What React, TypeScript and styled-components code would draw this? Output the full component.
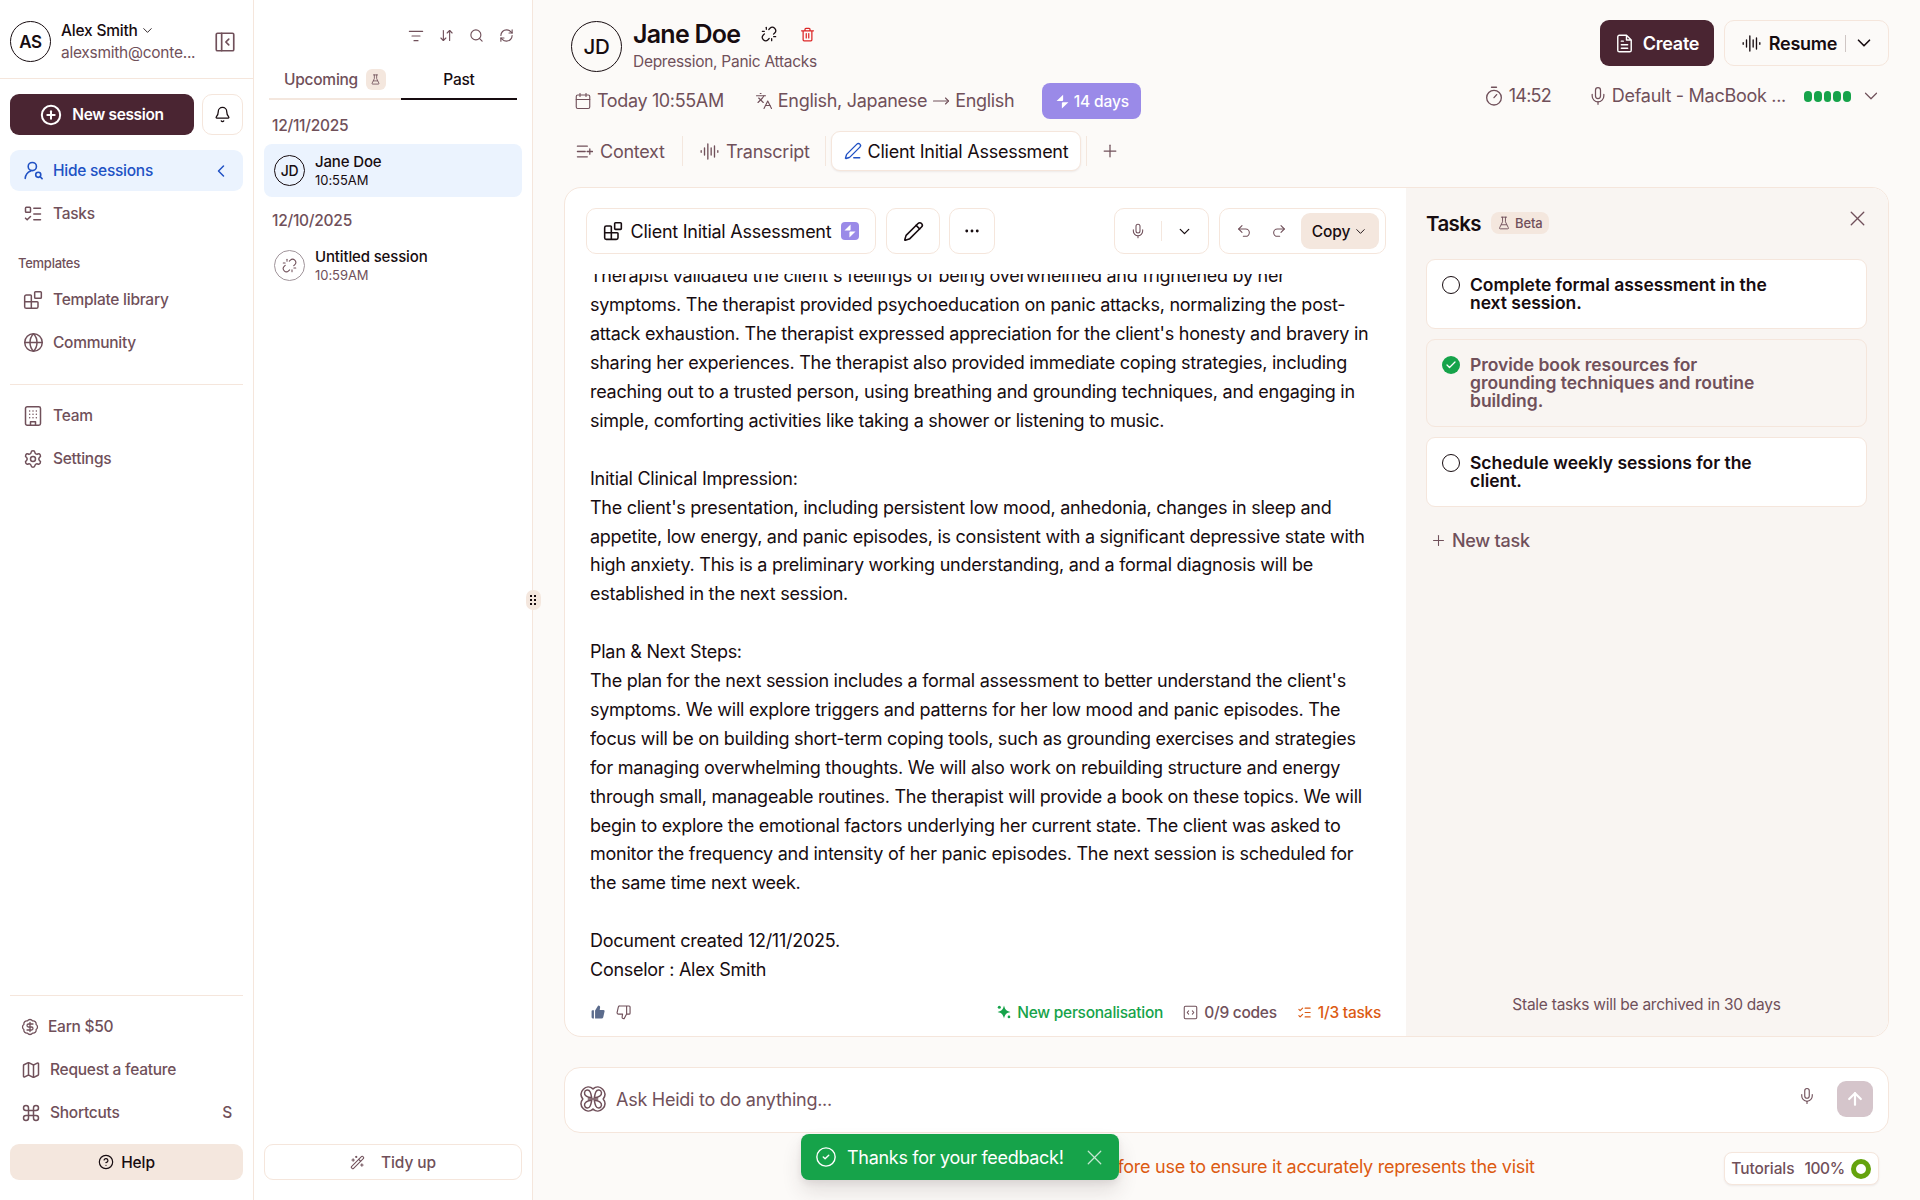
import type { ReactNode } from 'react';
import styled, { createGlobalStyle, css } from 'styled-components';
import {
  ArrowDownUp,
  ArrowUp,
  BadgeDollarSign,
  Bell,
  Blocks,
  Calendar,
  Check,
  ChevronDown,
  ChevronLeft,
  CircleCheck,
  CircleHelp,
  CirclePlus,
  Command,
  Ellipsis,
  Globe,
  Languages,
  ListChecks,
  ListFilter,
  ListTodo,
  Map as MapIcon,
  Mic,
  MoveRight,
  Pencil,
  PenLine,
  Plus,
  Redo2,
  RefreshCw,
  Search,
  Settings,
  Undo2,
  Unlink,
  WandSparkles,
  X,
} from 'lucide-react';

const colors = {
  ink: '#170c10',
  muted: '#70505a',
  border: '#f5e6dc',
  sand: '#f4e7de',
  page: '#fcfaf8',
  panel: '#f9f5f2',
  plum: '#4a2532',
  blue: '#2051c4',
  blueSoft: '#ebf3fe',
  purple: '#9a8ae8',
  green: '#16a34a',
  orange: '#dc5a12',
};

const GlobalStyle = createGlobalStyle`
  * { box-sizing: border-box; }
  body {
    margin: 0;
    font-family: Inter, 'Liberation Sans', sans-serif;
    letter-spacing: -0.26px;
    color: ${colors.ink};
    background: ${colors.page};
    overflow: hidden;
  }
  button {
    font: inherit;
    letter-spacing: inherit;
    color: inherit;
    background: none;
    border: 0;
    padding: 0;
  }
  svg { display: block; flex: none; }
`;

/* ---------- icons ---------- */

type IconProps = { size?: number; strokeWidth?: number };

const StrokeSvg = ({
  size = 18,
  strokeWidth = 1.6,
  children,
}: IconProps & { children: ReactNode }) => (
  <svg
    width={size}
    height={size}
    viewBox='0 0 24 24'
    fill='none'
    stroke='currentColor'
    strokeWidth={strokeWidth}
    strokeLinecap='round'
    strokeLinejoin='round'
  >
    {children}
  </svg>
);

const UserSearchIcon = (props: IconProps) => (
  <StrokeSvg {...props}>
    <circle cx='10.5' cy='7' r='5.2' />
    <path d='M1.5 22c.4-4.6 3-7.8 7-9.4' />
    <circle cx='18' cy='17.5' r='3.2' />
    <path d='m20.4 19.9 2.4 2.4' />
  </StrokeSvg>
);

const PanelCloseIcon = (props: IconProps) => (
  <StrokeSvg {...props}>
    <rect x='1.5' y='1.5' width='21' height='21' rx='1.6' />
    <path d='M8 1.5v21M16.5 8.5 13 12l3.5 3.5' />
  </StrokeSvg>
);

const FlaskIcon = (props: IconProps) => (
  <StrokeSvg {...props}>
    <path d='M7.5 2h9M9.5 2v8L4.6 20a1.4 1.4 0 0 0 1.3 2h12.2a1.4 1.4 0 0 0 1.3-2L14.5 10V2M7.5 15h9' />
  </StrokeSvg>
);

const BuildingIcon = (props: IconProps) => (
  <StrokeSvg {...props}>
    <rect x='3' y='1' width='18' height='22' rx='2' />
    <path d='M9 23v-4h6v4' />
    <path d='M8 6h.01M12 6h.01M16 6h.01M8 10h.01M12 10h.01M16 10h.01M8 14h.01M12 14h.01M16 14h.01' />
  </StrokeSvg>
);

const WaveIcon = (props: IconProps) => (
  <StrokeSvg {...props}>
    <path d='M1.5 11v2M5.7 7.5v9M9.9 2.5v19M14.1 7.5v9M18.3 5v14M22.5 11v2' />
  </StrokeSvg>
);

const ContextIcon = (props: IconProps) => (
  <StrokeSvg {...props}>
    <path d='M2 4.5h14M2 12h11M2 19.5h14M19.5 8.2v7.6M15.7 12h7.6' />
  </StrokeSvg>
);

const TrashIcon = (props: IconProps) => (
  <StrokeSvg {...props}>
    <path d='M2.5 6h19M5 6v14.5A1.5 1.5 0 0 0 6.5 22h11a1.5 1.5 0 0 0 1.5-1.5V6M8 6V3.5A1.5 1.5 0 0 1 9.5 2h5A1.5 1.5 0 0 1 16 3.5V6M10 10.5v7M14 10.5v7' />
  </StrokeSvg>
);

const FileIcon = (props: IconProps) => (
  <StrokeSvg {...props}>
    <path d='M14.5 1.5H5.5a2 2 0 0 0-2 2v17a2 2 0 0 0 2 2h13a2 2 0 0 0 2-2V7.5zM14.5 1.5v6h6M8 9h2.5M8 13.5h8M8 18h8' />
  </StrokeSvg>
);

const TimerIcon = (props: IconProps) => (
  <StrokeSvg {...props}>
    <circle cx='12' cy='14' r='8.8' />
    <path d='M9 1.5h6M12 14l3.2-3.7' />
  </StrokeSvg>
);

const CodesIcon = (props: IconProps) => (
  <StrokeSvg {...props}>
    <rect x='2' y='2' width='20' height='20' rx='2' />
    <path d='m9 9.5-2.3 2.5L9 14.5M15 9.5l2.3 2.5-2.3 2.5' />
  </StrokeSvg>
);

const BoltIcon = ({ size = 14 }: IconProps) => (
  <svg width={size} height={size} viewBox='0 0 24 24' fill='currentColor'>
    <path d='M13 1v8.500a1.500 1.500 0 0 1-1.500 1.500H2.500zM11 23v-8.500a1.500 1.500 0 0 1 1.500-1.500h9z' />
  </svg>
);

const SparkleIcon = ({ size = 14 }: IconProps) => (
  <svg width={size} height={size} viewBox='0 0 24 24' fill='currentColor'>
    <path d='M12 1c1.700 6.800 3.700 9.300 11 11-7.300 1.700-9.300 4.200-11 11-1.700-6.800-3.700-9.300-11-11 7.300-1.700 9.300-4.200 11-11z' />
    <circle cx='4' cy='4' r='2.6' />
    <circle cx='20.5' cy='20.5' r='2.3' />
  </svg>
);

const ThumbUpIcon = ({ size = 15 }: IconProps) => (
  <svg width={size} height={size} viewBox='0 0 24 24' fill='currentColor'>
    <path d='M1 10.5a1.5 1.5 0 0 1 1.5-1.5H5v14H3a2 2 0 0 1-2-2zM7 9.500 11.500 2.200C12 1.200 13 .8 14 1.200c1.300.5 1.800 1.600 1.600 2.800L15 8.500h6a2.300 2.300 0 0 1 2.200 2.800l-2.200 9.500A3 3 0 0 1 18 23H7z' />
  </svg>
);

const ThumbDownIcon = (props: IconProps) => (
  <StrokeSvg {...props}>
    <path d='M17 1.5v13l-4 7.300c-1.800.4-3.400-.8-3.200-2.700l.7-4.600H4a2.200 2.200 0 0 1-2.200-2.700l1.900-8.500A2.200 2.200 0 0 1 5.900 1.500zM17 1.500h4A1.500 1.500 0 0 1 22.500 3v10a1.500 1.500 0 0 1-1.500 1.500h-4' />
  </StrokeSvg>
);

const petal = 'M14.5 14.5C9.5 14.2 5.8 11.8 6.3 8.7 6.8 5.3 11.2 4.7 12.8 8c.9 1.9 1.3 4 1.7 6.5z';

const HeidiIcon = () => (
  <svg width='28' height='28' viewBox='0 0 32 32' fill='none' stroke='currentColor' strokeWidth='1.7'>
    <path d='M16 4.5C12.5 1.5 8 1.8 5 4.8 1.8 8 1.6 12.3 4.3 16 1.6 19.7 1.8 24 5 27.2c3 3 7.5 3.3 11 .3 3.500 3 8 2.700 11-.3 3.200-3.200 3.400-7.500.7-11.200C30.400 12.300 30.200 8 27 4.800 24 1.800 19.500 1.500 16 4.500z' />
    <path d={petal} />
    <path d={petal} transform='matrix(-1 0 0 1 32 0)' />
    <path d={petal} transform='matrix(1 0 0 -1 0 32)' />
    <path d={petal} transform='matrix(-1 0 0 -1 32 32)' />
    <path d='M10 16h12' />
  </svg>
);

/* ---------- shell ---------- */

const Shell = styled.div`
  display: flex;
  width: 1920px;
  height: 1200px;
`;

const Column = styled.div`
  display: flex;
  flex-direction: column;
  flex: none;
  height: 100%;
  background: #fff;
  border-right: 1px solid ${colors.border};
`;

const Row = styled.div`
  display: flex;
  align-items: center;
  white-space: nowrap;
`;

const outlined = css`
  border: 1px solid ${colors.border};
  background: #fff;
`;

const Avatar = styled.div<{ $size: number; $font: number; $weight?: number; $faded?: boolean }>`
  display: flex;
  align-items: center;
  justify-content: center;
  flex: none;
  width: ${(p) => p.$size}px;
  height: ${(p) => p.$size}px;
  border: 1px solid ${(p) => (p.$faded ? '#a0949a' : colors.ink)};
  border-radius: 50%;
  color: ${(p) => (p.$faded ? colors.muted : colors.ink)};
  font-size: ${(p) => p.$font}px;
  font-weight: ${(p) => p.$weight || 500};
`;

/* ---------- sidebar ---------- */

const Sidebar = styled(Column)`
  width: 254px;
`;

const Profile = styled(Row)`
  height: 79px;
  padding: 5px 18px 0 10px;
  border-bottom: 1px solid ${colors.border};
`;

const ProfileText = styled.div`
  width: 153px;
  padding-left: 10px;
  font-size: 15.5px;
  line-height: 22px;
  color: ${colors.muted};
`;

const ProfileName = styled(Row)`
  gap: 2px;
  color: ${colors.ink};
  font-weight: 500;
  letter-spacing: -0.2px;
`;

const SidebarActions = styled.div`
  display: flex;
  gap: 8px;
  padding: 15px 10px;
`;

const NewSession = styled.button`
  display: flex;
  align-items: center;
  justify-content: center;
  gap: 10px;
  width: 184px;
  height: 41px;
  border-radius: 9px;
  background: ${colors.plum};
  color: #fff;
  font-size: 15.5px;
  font-weight: 600;
  letter-spacing: -0.35px;
`;

const BellButton = styled.button`
  ${outlined}
  display: flex;
  align-items: center;
  justify-content: center;
  width: 41px;
  height: 41px;
  border-radius: 10px;
`;

const NavItem = styled.div<{ $active?: boolean }>`
  display: flex;
  align-items: center;
  height: 41px;
  margin: 0 10px 2px;
  padding: 0 12px 0 13px;
  border-radius: 9px;
  font-size: 15.5px;
  font-weight: 500;
  background: ${(p) => (p.$active ? colors.blueSoft : 'transparent')};
  color: ${(p) => (p.$active ? colors.blue : colors.muted)};

  > svg:last-child {
    margin-left: auto;
  }
`;

const NavGlyph = styled.span<{ $width?: number }>`
  display: flex;
  justify-content: center;
  width: ${(p) => p.$width || 20}px;
  margin-right: 10px;
`;

const NavHeading = styled.div`
  padding: 17px 18px 6px;
  font-size: 13px;
  line-height: 20px;
  font-weight: 500;
  color: ${colors.muted};
`;

const Separator = styled.div<{ $top?: number }>`
  height: 1px;
  margin: ${(p) => p.$top || 0}px 10px 10px;
  background: ${colors.border};
`;

const Spacer = styled.div`
  flex: 1;
`;

const FooterItem = styled(NavItem)`
  padding: 0 11px;
`;

const Shortcut = styled.span`
  margin-left: auto;
`;

const HelpButton = styled.button`
  display: flex;
  align-items: center;
  justify-content: center;
  gap: 7px;
  height: 36px;
  margin: 9px 10px 20px;
  border-radius: 9px;
  background: ${colors.sand};
  font-size: 15.5px;
  font-weight: 500;
  letter-spacing: -0.1px;
`;

/* ---------- session list ---------- */

const Sessions = styled(Column)`
  position: relative;
  width: 279px;
`;

const SessionTools = styled(Row)`
  justify-content: flex-end;
  gap: 15px;
  height: 71px;
  padding-right: 18px;
  color: ${colors.muted};
`;

const SessionTabs = styled.div`
  display: grid;
  grid-template-columns: 132px 116px;
  margin: -10px 0 0 15px;
`;

const SessionTab = styled.div<{ $active?: boolean }>`
  display: flex;
  align-items: center;
  justify-content: center;
  gap: 8px;
  height: 39px;
  font-size: 15.5px;
  font-weight: 500;
  border-bottom: 2px solid ${(p) => (p.$active ? colors.ink : colors.sand)};
  color: ${(p) => (p.$active ? colors.ink : colors.muted)};
`;

const FlaskBadge = styled.span`
  display: flex;
  align-items: center;
  justify-content: center;
  width: 20px;
  height: 21px;
  border-radius: 6px;
  background: ${colors.sand};
`;

const SessionDate = styled.div<{ $top: number }>`
  padding: ${(p) => p.$top}px 17px 8px 18px;
  font-size: 15.5px;
  line-height: 20px;
  font-weight: 500;
  color: ${colors.muted};
`;

const SessionItem = styled.div<{ $active?: boolean }>`
  display: flex;
  align-items: center;
  gap: 10px;
  height: 53px;
  margin: 0 10px;
  padding: 0 10px;
  border-radius: 8px;
  background: ${(p) => (p.$active ? colors.blueSoft : 'transparent')};
`;

const SessionName = styled.div`
  font-size: 15px;
  line-height: 19px;
  font-weight: 500;
  letter-spacing: -0.15px;
`;

const SessionTime = styled.div<{ $active?: boolean }>`
  font-size: 13px;
  line-height: 18px;
  letter-spacing: -0.05px;
  color: ${(p) => (p.$active ? colors.ink : colors.muted)};
`;

const TidyButton = styled.button`
  ${outlined}
  display: flex;
  align-items: center;
  justify-content: center;
  gap: 16px;
  height: 36px;
  margin: 0 10px 20px;
  border-radius: 9px;
  font-size: 15.5px;
  font-weight: 500;
  letter-spacing: -0.1px;
  color: ${colors.muted};
`;

const ResizeHandle = styled.div`
  position: absolute;
  right: -9px;
  top: 590px;
  display: grid;
  grid-template-columns: 3px 3px;
  gap: 1px 1px;
  align-content: center;
  justify-content: center;
  width: 15px;
  height: 20px;
  border-radius: 7px;
  background: ${colors.sand};

  i {
    width: 2px;
    height: 2px;
    margin-bottom: 1px;
    background: ${colors.ink};
  }
`;

/* ---------- main header ---------- */

const Main = styled.main`
  display: flex;
  flex-direction: column;
  flex: 1;
  min-width: 0;
  padding: 0 31px;
`;

const Header = styled.header`
  display: flex;
  justify-content: space-between;
  height: 187px;
`;

const HeaderLeft = styled.div`
  padding: 20px 0 0 7px;
`;

const PatientName = styled.div`
  margin-right: 21px;
  font-size: 25px;
  font-weight: 600;
  letter-spacing: -0.75px;
`;

const NameRow = styled(Row)`
  height: 28px;
  color: ${colors.ink};

  span {
    margin-left: 23px;
    color: #dc2626;
  }
`;

const PatientText = styled.div`
  padding-left: 11px;
`;

const Conditions = styled.div`
  padding-top: 4px;
  font-size: 15.5px;
  line-height: 20px;
  letter-spacing: -0.28px;
  color: ${colors.muted};
`;

const MetaRow = styled(Row)`
  height: 36px;
  margin-top: 11px;
  font-size: 18px;
  color: ${colors.muted};
`;

const Meta = styled(Row)<{ $left?: number; $gap?: number; $tracking?: number }>`
  gap: ${(p) => p.$gap || 5}px;
  margin-left: ${(p) => p.$left || 0}px;
  padding-bottom: 1px;
  letter-spacing: ${(p) => p.$tracking || -0.28}px;
`;

const DaysPill = styled.div`
  display: flex;
  align-items: center;
  justify-content: center;
  gap: 4px;
  width: 99px;
  height: 36px;
  margin-left: 28px;
  border-radius: 8px;
  background: ${colors.purple};
  color: #fff;
  font-size: 15.5px;
  font-weight: 500;
  letter-spacing: -0.1px;
`;

const Tabs = styled(Row)`
  height: 40px;
  margin-top: 12px;
  padding-left: 5px;
  font-size: 18px;
  color: ${colors.muted};
`;

const Tab = styled(Row)<{ $width: number; $left?: number }>`
  gap: 7px;
  width: ${(p) => p.$width}px;
  margin-left: ${(p) => p.$left || 0}px;
`;

const ActiveTab = styled(Row)`
  ${outlined}
  justify-content: center;
  gap: 6px;
  width: 250px;
  height: 40px;
  margin: 0 5px;
  border-radius: 9px;
  color: ${colors.ink};
  box-shadow: 0 1px 2px rgba(70, 35, 45, 0.08);

  svg {
    color: ${colors.blue};
  }
`;

const VLine = styled.i<{ $height: number; $color?: string }>`
  flex: none;
  width: 1px;
  height: ${(p) => p.$height}px;
  background: ${(p) => p.$color || colors.sand};
`;

const HeaderRight = styled.div`
  display: flex;
  flex-direction: column;
  align-items: flex-end;
  padding-top: 20px;
`;

const HeaderButtons = styled.div`
  display: flex;
  gap: 10px;
  font-size: 18px;
  font-weight: 600;
`;

const CreateButton = styled.button`
  display: flex;
  align-items: center;
  justify-content: center;
  gap: 9px;
  width: 114px;
  height: 46px;
  border-radius: 9px;
  background: ${colors.plum};
  color: #fff;
`;

const ResumeButton = styled.button`
  ${outlined}
  display: flex;
  align-items: center;
  justify-content: center;
  gap: 8px;
  width: 165px;
  height: 46px;
  border-radius: 10px;
  background: ${colors.page};

  svg:last-child {
    margin: 0 -4px 0 -1px;
  }
`;

const DeviceRow = styled(Row)`
  height: 24px;
  margin-top: 18px;
  padding-right: 7px;
  font-size: 18px;
  color: ${colors.muted};
`;

const LevelMeter = styled.div`
  display: flex;
  gap: 2px;
  margin: 0 9px 0 18px;

  i {
    width: 7.8px;
    height: 11px;
    border-radius: 4px;
    background: ${colors.green};
  }
`;

/* ---------- document ---------- */

const Workspace = styled.section`
  display: flex;
  height: 850px;
  border: 1px solid ${colors.border};
  border-radius: 17px;
  overflow: hidden;
  background: #fff;
`;

const Document = styled.div`
  display: flex;
  flex-direction: column;
  width: 841px;
  padding: 20px 20px 0 21px;
`;

const Toolbar = styled.div`
  display: flex;
  height: 46px;
`;

const ToolBox = styled.div<{ $width: number; $left?: number }>`
  ${outlined}
  display: flex;
  align-items: center;
  justify-content: center;
  width: ${(p) => p.$width}px;
  height: 46px;
  margin-left: ${(p) => p.$left || 0}px;
  border-radius: 10px;
  white-space: nowrap;
  font-size: 18px;
  color: ${colors.ink};
`;

const TemplateName = styled.span`
  margin: 0 10px 0 8px;
`;

const BoltBadge = styled.span`
  display: flex;
  align-items: center;
  justify-content: center;
  width: 18px;
  height: 18px;
  border-radius: 4px;
  background: ${colors.purple};
  color: #fff;
`;

const MutedIcon = styled.span<{ $margin: string }>`
  margin: ${(p) => p.$margin};
  color: ${colors.muted};
`;

const CopyButton = styled.button`
  display: flex;
  align-items: center;
  justify-content: center;
  gap: 3px;
  width: 78px;
  height: 36px;
  border-radius: 9px;
  background: ${colors.sand};
  font-size: 15.5px;
  font-weight: 500;
  letter-spacing: -0.1px;
`;

const NoteWindow = styled.div`
  display: flex;
  flex-direction: column;
  justify-content: flex-end;
  height: 711px;
  margin: 20px 0 0 4px;
  overflow: hidden;
`;

const Note = styled.p`
  margin: 0;
  font-size: 18px;
  line-height: 28.9px;
  letter-spacing: -0.265px;
  white-space: pre;
`;

const NoteFooter = styled(Row)`
  height: 24px;
  margin-top: 15px;
  padding: 0 5px 0 5px;
  font-size: 15.5px;
  font-weight: 500;
`;

const Stat = styled(Row)<{ $color: string; $left?: number }>`
  gap: 6px;
  margin-left: ${(p) => p.$left || 0}px;
  color: ${(p) => p.$color};
`;

/* ---------- tasks ---------- */

const TaskPanel = styled.aside`
  display: flex;
  flex-direction: column;
  flex: 1;
  padding: 23px 21px 0 20px;
  background: ${colors.panel};
`;

const TaskHead = styled(Row)`
  height: 24px;
  margin-bottom: 24px;
`;

const TaskTitle = styled.h2`
  margin: 0 10px 0 0;
  font-size: 20.5px;
  font-weight: 600;
  letter-spacing: -0.6px;
`;

const Beta = styled(Row)`
  gap: 4px;
  height: 22px;
  padding: 0 6px;
  border-radius: 8px;
  background: ${colors.sand};
  font-size: 13px;
  font-weight: 500;
  letter-spacing: -0.1px;
  color: ${colors.muted};
`;

const CloseTasks = styled.button`
  margin: -10px -3px 0 auto;
  color: ${colors.muted};
`;

const TaskCard = styled.div<{ $done?: boolean }>`
  display: flex;
  gap: 10px;
  margin-bottom: 10px;
  padding: 16px 16px 16px 15px;
  border: 1px solid ${colors.border};
  border-radius: 9px;
  background: ${(p) => (p.$done ? 'transparent' : '#fff')};
  color: ${(p) => (p.$done ? colors.muted : colors.ink)};
`;

const TaskText = styled.div`
  font-size: 17.5px;
  line-height: 17.95px;
  font-weight: 600;
  letter-spacing: -0.04px;
  white-space: pre;
`;

const TaskMark = styled.span<{ $done?: boolean }>`
  display: flex;
  align-items: center;
  justify-content: center;
  flex: none;
  width: 18px;
  height: 18px;
  border: ${(p) => (p.$done ? 0 : '1.5px')} solid ${colors.ink};
  border-radius: 50%;
  background: ${(p) => (p.$done ? colors.green : 'transparent')};
  color: #fff;
`;

const NewTask = styled(Row)`
  gap: 5px;
  margin-top: 13px;
  padding-left: 4px;
  font-size: 18px;
  font-weight: 500;
  color: ${colors.muted};
`;

const StaleNote = styled.div`
  margin-bottom: 21px;
  text-align: center;
  font-size: 15.5px;
  line-height: 20px;
  color: ${colors.muted};
`;

/* ---------- bottom ---------- */

const AskBar = styled.div`
  ${outlined}
  display: flex;
  align-items: center;
  height: 66px;
  margin-top: 30px;
  padding: 0 15px 2px 14px;
  border-radius: 16px;
  font-size: 18px;
  color: ${colors.muted};
`;

const Placeholder = styled.span`
  margin: 0 auto 0 9px;
`;

const AskMic = styled.span`
  margin: -6px 21px 0 0;
`;

const SendButton = styled.button`
  display: flex;
  align-items: center;
  justify-content: center;
  width: 36px;
  height: 36px;
  border-radius: 9px;
  background: #d5c5cb;
  color: #fff;
`;

const BottomRow = styled.div`
  position: relative;
  display: flex;
  justify-content: center;
  height: 67px;
  padding-top: 22px;
`;

const Disclaimer = styled.div`
  padding-left: 31px;
  font-size: 18px;
  line-height: 24px;
  white-space: nowrap;
  color: ${colors.orange};
`;

const Toast = styled.div`
  position: absolute;
  left: 237px;
  top: 1px;
  display: flex;
  align-items: center;
  width: 318px;
  height: 46px;
  padding: 0 12px 0 14px;
  border-radius: 8px;
  background: ${colors.green};
  color: #fff;
  font-size: 18px;
  white-space: nowrap;
  box-shadow: 0 12px 20px rgba(60, 40, 45, 0.12), 0 3px 6px rgba(60, 40, 45, 0.08);

  span {
    margin: 0 auto 0 10px;
    letter-spacing: -0.3px;
  }

  svg:last-child {
    opacity: 0.75;
  }
`;

const Tutorials = styled.div`
  ${outlined}
  position: absolute;
  right: 10px;
  top: 19px;
  display: flex;
  align-items: center;
  justify-content: center;
  width: 155px;
  height: 33px;
  border-radius: 8px;
  color: ${colors.muted};
  font-size: 15.5px;
  font-weight: 500;
  letter-spacing: -0.1px;
  box-shadow: 0 1px 2px rgba(70, 35, 45, 0.08);
`;

const Percent = styled.span`
  margin: 0 6px 0 10px;
  letter-spacing: -0.4px;
`;

const Ring = styled.i`
  width: 20px;
  height: 20px;
  margin-right: 1px;
  border: 5px solid #65a30d;
  border-radius: 50%;
`;

const noteText = `Therapist validated the client's feelings of being overwhelmed and frightened by her
symptoms. The therapist provided psychoeducation on panic attacks, normalizing the post-
attack exhaustion. The therapist expressed appreciation for the client's honesty and bravery in
sharing her experiences. The therapist also provided immediate coping strategies, including
reaching out to a trusted person, using breathing and grounding techniques, and engaging in
simple, comforting activities like taking a shower or listening to music.

Initial Clinical Impression:
The client's presentation, including persistent low mood, anhedonia, changes in sleep and
appetite, low energy, and panic episodes, is consistent with a significant depressive state with
high anxiety. This is a preliminary working understanding, and a formal diagnosis will be
established in the next session.

Plan & Next Steps:
The plan for the next session includes a formal assessment to better understand the client's
symptoms. We will explore triggers and patterns for her low mood and panic episodes. The
focus will be on building short-term coping tools, such as grounding exercises and strategies
for managing overwhelming thoughts. We will also work on rebuilding structure and energy
through small, manageable routines. The therapist will provide a book on these topics. We will
begin to explore the emotional factors underlying her current state. The client was asked to
monitor the frequency and intensity of her panic episodes. The next session is scheduled for
the same time next week.

Document created 12/11/2025.
Conselor : Alex Smith`;

const tasks = [
  { text: 'Complete formal assessment in the\nnext session.', done: false },
  { text: 'Provide book resources for\ngrounding techniques and routine\nbuilding.', done: true },
  { text: 'Schedule weekly sessions for the\nclient.', done: false },
];

const SidebarView = () => (
  <Sidebar>
    <Profile>
      <Avatar $size={41} $font={17} $weight={600}>
        AS
      </Avatar>
      <ProfileText>
        <ProfileName>
          Alex Smith <ChevronDown size={15} strokeWidth={1.4} />
        </ProfileName>
        alexsmith@conte...
      </ProfileText>
      <MutedIcon $margin='0 0 0 auto'>
        <PanelCloseIcon size={20} strokeWidth={2} />
      </MutedIcon>
    </Profile>
    <SidebarActions>
      <NewSession>
        <CirclePlus size={22} strokeWidth={2.2} />
        New session
      </NewSession>
      <BellButton>
        <Bell size={17} strokeWidth={1.8} />
      </BellButton>
    </SidebarActions>
    <NavItem $active>
      <NavGlyph>
        <UserSearchIcon size={19} strokeWidth={2} />
      </NavGlyph>
      Hide sessions
      <ChevronLeft size={20} strokeWidth={1.8} />
    </NavItem>
    <NavItem>
      <NavGlyph>
        <ListTodo size={20} strokeWidth={1.8} />
      </NavGlyph>
      Tasks
    </NavItem>
    <NavHeading>Templates</NavHeading>
    <NavItem>
      <NavGlyph>
        <Blocks size={20} strokeWidth={1.8} />
      </NavGlyph>
      Template library
    </NavItem>
    <NavItem>
      <NavGlyph>
        <Globe size={21} strokeWidth={1.7} />
      </NavGlyph>
      Community
    </NavItem>
    <Separator $top={19} />
    <NavItem>
      <NavGlyph>
        <BuildingIcon size={20} strokeWidth={1.8} />
      </NavGlyph>
      Team
    </NavItem>
    <NavItem>
      <NavGlyph>
        <Settings size={20} strokeWidth={1.8} />
      </NavGlyph>
      Settings
    </NavItem>
    <Spacer />
    <Separator />
    <FooterItem>
      <NavGlyph $width={17}>
        <BadgeDollarSign size={18} strokeWidth={1.7} />
      </NavGlyph>
      Earn $50
    </FooterItem>
    <FooterItem>
      <NavGlyph $width={19}>
        <MapIcon size={20} strokeWidth={1.8} />
      </NavGlyph>
      Request a feature
    </FooterItem>
    <FooterItem>
      <NavGlyph $width={19}>
        <Command size={20} strokeWidth={1.8} />
      </NavGlyph>
      Shortcuts
      <Shortcut>S</Shortcut>
    </FooterItem>
    <HelpButton>
      <CircleHelp size={16} strokeWidth={1.8} />
      Help
    </HelpButton>
  </Sidebar>
);

const SessionsView = () => (
  <Sessions>
    <SessionTools>
      <ListFilter size={16} strokeWidth={1.7} />
      <ArrowDownUp size={15} strokeWidth={1.8} />
      <Search size={15} strokeWidth={1.8} />
      <RefreshCw size={15} strokeWidth={1.8} />
    </SessionTools>
    <SessionTabs>
      <SessionTab>
        Upcoming
        <FlaskBadge>
          <FlaskIcon size={11} strokeWidth={1.8} />
        </FlaskBadge>
      </SessionTab>
      <SessionTab $active>Past</SessionTab>
    </SessionTabs>
    <SessionDate $top={16}>12/11/2025</SessionDate>
    <SessionItem $active>
      <Avatar $size={31} $font={14}>
        JD
      </Avatar>
      <div>
        <SessionName>Jane Doe</SessionName>
        <SessionTime $active>10:55AM</SessionTime>
      </div>
    </SessionItem>
    <SessionDate $top={14}>12/10/2025</SessionDate>
    <SessionItem>
      <Avatar $size={31} $font={14} $faded>
        <Unlink size={15} strokeWidth={1.7} />
      </Avatar>
      <div>
        <SessionName>Untitled session</SessionName>
        <SessionTime>10:59AM</SessionTime>
      </div>
    </SessionItem>
    <Spacer />
    <TidyButton>
      <WandSparkles size={15} strokeWidth={1.7} />
      Tidy up
    </TidyButton>
    <ResizeHandle>
      <i />
      <i />
      <i />
      <i />
      <i />
      <i />
    </ResizeHandle>
  </Sessions>
);

const HeaderView = () => (
  <Header>
    <HeaderLeft>
      <Row>
        <Avatar $size={51} $font={20.5}>
          JD
        </Avatar>
        <PatientText>
          <NameRow>
            <PatientName>Jane Doe</PatientName>
            <Unlink size={16} strokeWidth={1.9} />
            <span>
              <TrashIcon size={15} strokeWidth={2} />
            </span>
          </NameRow>
          <Conditions>Depression, Panic Attacks</Conditions>
        </PatientText>
      </Row>
      <MetaRow>
        <Meta $left={3} $gap={5} $tracking={-0.36}>
          <Calendar size={18} strokeWidth={1.5} />
          Today 10:55AM
        </Meta>
        <Meta $left={31} $gap={5} $tracking={-0.3}>
          <Languages size={18} strokeWidth={1.5} />
          English, Japanese
          <MoveRight size={18} strokeWidth={1.5} />
          English
        </Meta>
        <DaysPill>
          <BoltIcon size={15} />
          14 days
        </DaysPill>
      </MetaRow>
      <Tabs>
        <Tab $width={106}>
          <ContextIcon size={17} strokeWidth={1.8} />
          Context
        </Tab>
        <VLine $height={30} />
        <Tab $width={125} $left={17}>
          <WaveIcon size={19} strokeWidth={1.7} />
          Transcript
        </Tab>
        <VLine $height={30} />
        <ActiveTab>
          <PenLine size={18} strokeWidth={1.8} />
          Client Initial Assessment
        </ActiveTab>
        <VLine $height={30} />
        <MutedIcon $margin='0 0 0 13px'>
          <Plus size={20} strokeWidth={1.5} />
        </MutedIcon>
      </Tabs>
    </HeaderLeft>
    <HeaderRight>
      <HeaderButtons>
        <CreateButton>
          <FileIcon size={19} strokeWidth={1.8} />
          Create
        </CreateButton>
        <ResumeButton>
          <WaveIcon size={19} strokeWidth={1.7} />
          Resume
          <VLine $height={17} $color='#cfc6c4' />
          <ChevronDown size={22} strokeWidth={1.8} />
        </ResumeButton>
      </HeaderButtons>
      <DeviceRow>
        <Meta $tracking={-0.8}>
          <TimerIcon size={20} strokeWidth={1.6} />
          14:52
        </Meta>
        <Meta $left={37} $gap={4}>
          <Mic size={20} strokeWidth={1.5} />
          Default - MacBook ...
        </Meta>
        <LevelMeter>
          <i />
          <i />
          <i />
          <i />
          <i />
        </LevelMeter>
        <ChevronDown size={22} strokeWidth={1.3} />
      </DeviceRow>
    </HeaderRight>
  </Header>
);

const DocumentView = () => (
  <Document>
    <Toolbar>
      <ToolBox $width={290}>
        <Blocks size={20} strokeWidth={1.9} />
        <TemplateName>Client Initial Assessment</TemplateName>
        <BoltBadge>
          <BoltIcon size={14} />
        </BoltBadge>
      </ToolBox>
      <ToolBox $width={54} $left={10}>
        <Pencil size={21} strokeWidth={1.8} />
      </ToolBox>
      <ToolBox $width={46} $left={9}>
        <Ellipsis size={18} strokeWidth={1.8} />
      </ToolBox>
      <Spacer />
      <ToolBox $width={95}>
        <MutedIcon $margin='0'>
          <Mic size={16} strokeWidth={1.6} />
        </MutedIcon>
        <MutedIcon $margin='0 14px 0 15px'>
          <VLine as='div' $height={20} />
        </MutedIcon>
        <ChevronDown size={17} strokeWidth={1.8} />
      </ToolBox>
      <ToolBox $width={167} $left={10}>
        <MutedIcon $margin='0 19px 0 10px'>
          <Undo2 size={16} strokeWidth={1.6} />
        </MutedIcon>
        <MutedIcon $margin='0 14px 0 0'>
          <Redo2 size={16} strokeWidth={1.6} />
        </MutedIcon>
        <CopyButton>
          Copy
          <ChevronDown size={15} strokeWidth={1.5} />
        </CopyButton>
      </ToolBox>
    </Toolbar>
    <NoteWindow>
      <Note>{noteText}</Note>
    </NoteWindow>
    <NoteFooter>
      <Stat $color='#5b6b8c'>
        <ThumbUpIcon size={14} />
      </Stat>
      <Stat $color={colors.muted} $left={11}>
        <ThumbDownIcon size={15} strokeWidth={1.8} />
      </Stat>
      <Spacer />
      <Stat $color={colors.green}>
        <SparkleIcon size={14} />
        New personalisation
      </Stat>
      <Stat $color={colors.muted} $left={20}>
        <CodesIcon size={15} strokeWidth={1.7} />
        0/9 codes
      </Stat>
      <Stat $color={colors.orange} $left={20}>
        <ListChecks size={15} strokeWidth={1.8} />
        1/3 tasks
      </Stat>
    </NoteFooter>
  </Document>
);

const TasksView = () => (
  <TaskPanel>
    <TaskHead>
      <TaskTitle>Tasks</TaskTitle>
      <Beta>
        <FlaskIcon size={14} />
        Beta
      </Beta>
      <CloseTasks>
        <X size={25} strokeWidth={1.3} />
      </CloseTasks>
    </TaskHead>
    {tasks.map((task) => (
      <TaskCard key={task.text} $done={task.done}>
        <TaskMark $done={task.done}>{task.done && <Check size={12} strokeWidth={2.5} />}</TaskMark>
        <TaskText>{task.text}</TaskText>
      </TaskCard>
    ))}
    <NewTask>
      <Plus size={17} strokeWidth={1.5} />
      New task
    </NewTask>
    <Spacer />
    <StaleNote>Stale tasks will be archived in 30 days</StaleNote>
  </TaskPanel>
);

export default function App() {
  return (
    <Shell>
      <GlobalStyle />
      <SidebarView />
      <SessionsView />
      <Main>
        <HeaderView />
        <Workspace>
          <DocumentView />
          <TasksView />
        </Workspace>
        <AskBar>
          <HeidiIcon />
          <Placeholder>Ask Heidi to do anything...</Placeholder>
          <AskMic>
            <Mic size={18} strokeWidth={1.5} />
          </AskMic>
          <SendButton>
            <ArrowUp size={20} strokeWidth={2.6} />
          </SendButton>
        </AskBar>
        <BottomRow>
          <Disclaimer>Review your note before use to ensure it accurately represents the visit</Disclaimer>
          <Toast>
            <CircleCheck size={22} strokeWidth={1.5} />
            <span>Thanks for your feedback!</span>
            <X size={25} strokeWidth={1.2} />
          </Toast>
          <Tutorials>
            Tutorials
            <Percent>100%</Percent>
            <Ring />
          </Tutorials>
        </BottomRow>
      </Main>
    </Shell>
  );
}
